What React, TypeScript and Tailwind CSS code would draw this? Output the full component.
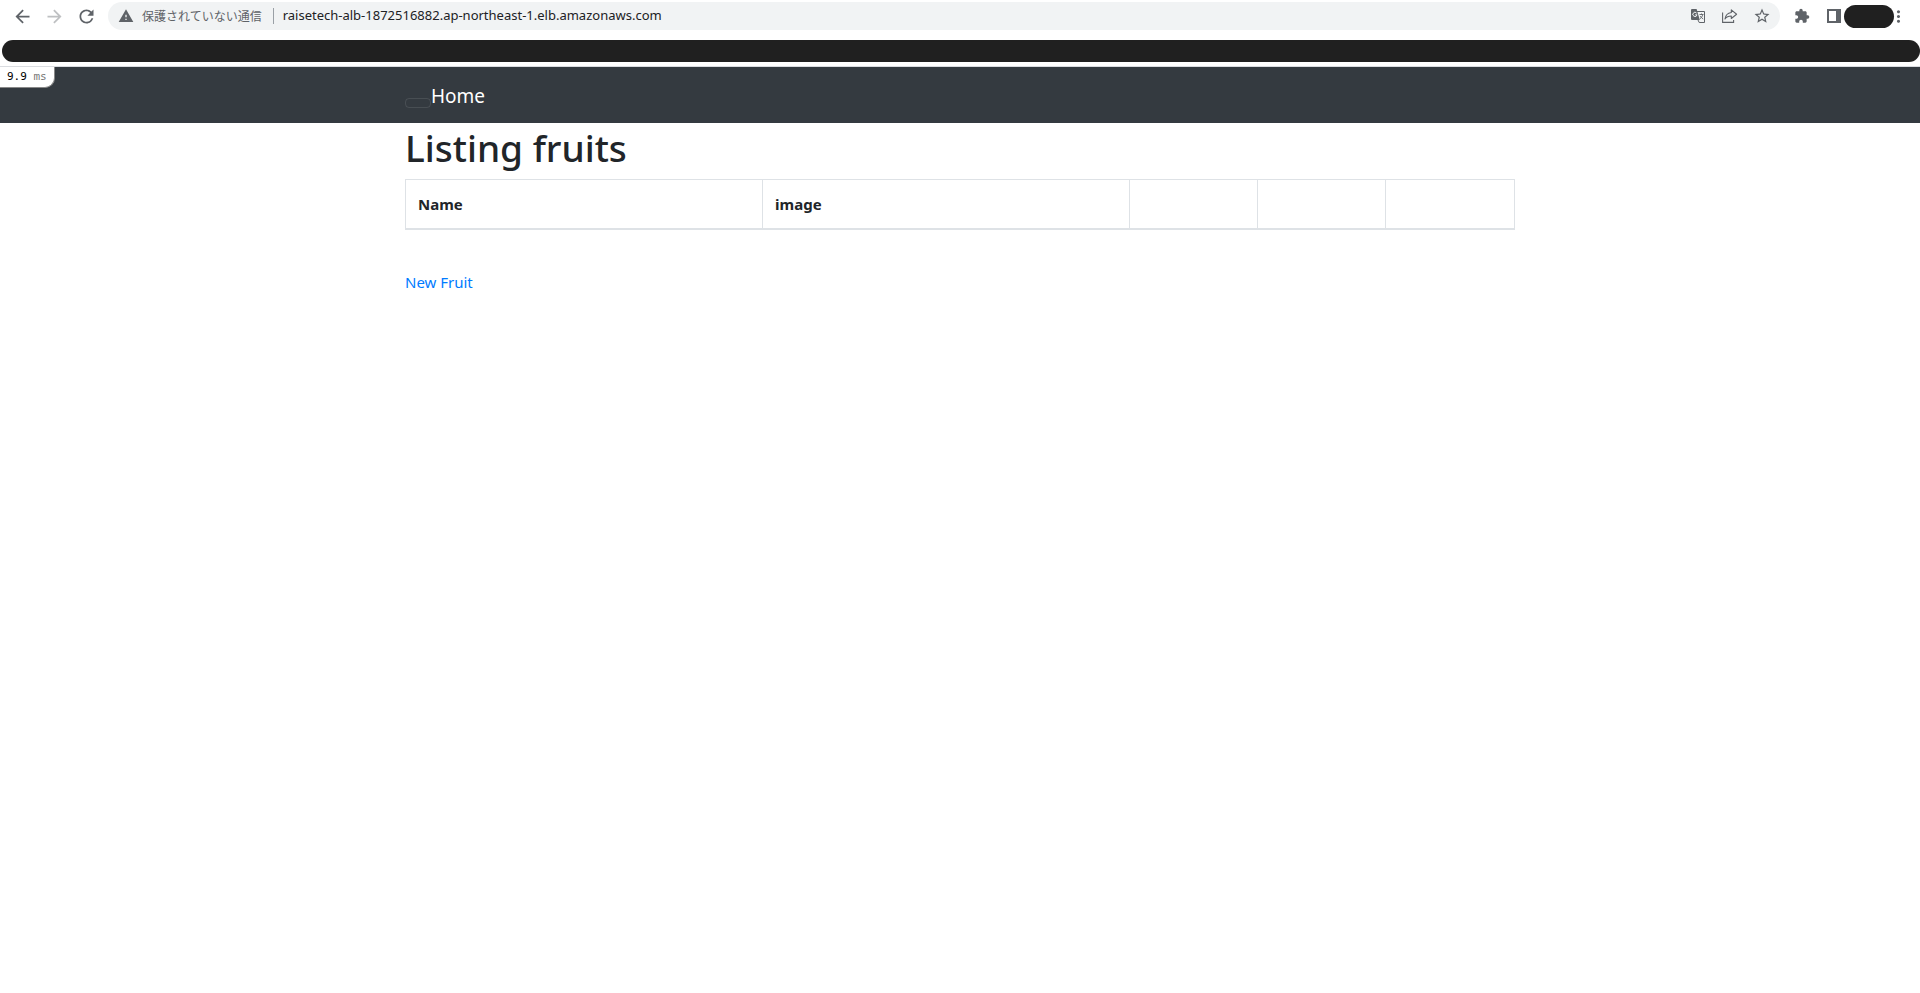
import React from 'react';
import { MdArrowBack, MdArrowForward, MdRefresh, MdWarning, MdStarBorder, MdExtension, MdMoreVert } from 'react-icons/md';

function TranslateIcon() {
  return (
    <svg width="14" height="14" viewBox="0 0 14 14" fill="none" aria-hidden="true">
      <path d="M5.5 2.5h8v11H8.2L7 11" stroke="#5f6368" />
      <path d="M1 0h4.6l3.2 11H1a1 1 0 0 1-1-1V1a1 1 0 0 1 1-1z" fill="#5f6368" />
      <path d="M5.6 4.1A2.1 2.1 0 1 0 6 5.8H4.2" stroke="#f1f3f4" />
      <path d="M8.5 5.5H12.5M10.5 4.5v1M11.7 5.7c-.3 1.700-1.200 2.800-2.600 4M9.300 7c.6 1.100 1.600 2.200 2.900 3" stroke="#5f6368" strokeWidth=".9" />
    </svg>
  );
}

function ShareIcon() {
  return (
    <svg width="16" height="14" viewBox="0 0 16 14" fill="none" stroke="#5f6368" strokeWidth="1.1" aria-hidden="true">
      <path d="M.6 3.500v9.900h11V11" />
      <path d="M9.300.9 14.600 5.200 9.300 9.500V7C6.400 7 4.400 7.900 3 10c.4-3.200 2.500-6 6.300-6.500z" strokeLinejoin="round" />
    </svg>
  );
}

function SidePanelIcon() {
  return (
    <svg width="14" height="14" viewBox="0 0 14 14" aria-hidden="true">
      <path fillRule="evenodd" d="M0 0h14v14H0zM2 2v10h7V2z" fill="#5f6368" />
    </svg>
  );
}

type IconButtonProps = { label: string; className?: string; children: React.ReactNode };

function IconButton({ label, className = 'w-8', children }: IconButtonProps) {
  return (
    <button type="button" aria-label={label} className={`flex h-7 shrink-0 items-center justify-center text-[#5f6368] ${className}`}>
      {children}
    </button>
  );
}

function BrowserBar() {
  return (
    <div className="border-b border-[#dadce0] pb-1 pt-[2px]">
      <div className="flex items-center pl-[6px] pr-[18px]">
        <IconButton label="戻る"><MdArrowBack size={21} /></IconButton>
        <IconButton label="進む" className="w-8 opacity-40"><MdArrowForward size={21} /></IconButton>
        <IconButton label="再読み込み"><MdRefresh size={21} /></IconButton>
        <div className="mx-[6px] flex h-7 min-w-0 flex-1 items-center rounded-full bg-[#f1f3f4] pl-[10px] pr-[2px]">
          <MdWarning size={16} className="shrink-0 text-[#5f6368]" />
          <span className="ml-2 whitespace-nowrap font-['Noto_Sans_CJK_JP',sans-serif] text-xs text-[#5f6368]">保護されていない通信</span>
          <span className="ml-[11px] h-4 w-px bg-[#9aa0a6]" />
          <input
            type="text"
            aria-label="アドレス"
            defaultValue="raisetech-alb-1872516882.ap-northeast-1.elb.amazonaws.com"
            className="ml-[9px] min-w-0 flex-1 bg-transparent text-[13px] text-[#202124] outline-none"
          />
          <IconButton label="翻訳"><TranslateIcon /></IconButton>
          <IconButton label="共有"><ShareIcon /></IconButton>
          <IconButton label="ブックマーク"><MdStarBorder size={18} /></IconButton>
        </div>
        <IconButton label="拡張機能"><MdExtension size={16} /></IconButton>
        <IconButton label="サイドパネル" className="ml-[6px] w-5"><SidePanelIcon /></IconButton>
        <div className="h-[23px] w-[50px] shrink-0 rounded-full bg-[#202020]" />
        <IconButton label="メニュー" className="w-2"><MdMoreVert size={19} className="shrink-0" /></IconButton>
      </div>
      <div className="ml-[2px] mt-[10px] h-[22px] rounded-full bg-[#202020]" />
    </div>
  );
}

function Navbar() {
  return (
    <nav className="relative bg-[#343a40]">
      <div className="absolute left-0 top-0 rounded-br-[10px] border-b border-r border-[#888] bg-white px-[7px] py-[2px] font-['DejaVu_Sans_Mono',monospace] text-[11px] leading-4 text-black">
        9.9 <span className="text-[#777]">ms</span>
      </div>
      <div className="mx-auto flex h-14 max-w-[1140px] items-center px-[15px]">
        <button type="button" aria-label="Toggle navigation" className="mt-4 h-[10px] w-[26px] rounded border border-white/10" />
        <a href="/" className="pt-[2px] text-[19px] leading-[30px] text-white">Home</a>
      </div>
    </nav>
  );
}

const columns = [
  { id: 'name', title: 'Name', width: 'w-[32.2%]' },
  { id: 'image', title: 'image', width: 'w-[33.1%]' },
  { id: 'show', title: '', width: 'w-[11.5%]' },
  { id: 'edit', title: '', width: 'w-[11.6%]' },
  { id: 'destroy', title: '', width: 'w-[11.6%]' },
];

export default function App() {
  return (
    <div className="min-h-screen bg-white font-['Noto_Sans',sans-serif] text-[#212529]">
      <BrowserBar />
      <Navbar />
      <main className="mx-auto max-w-[1140px] px-[15px]">
        <h1 className="mb-2 pt-[2px] text-[37px] font-[550] leading-[46px]">Listing fruits</h1>
        <table className="w-full table-fixed border-collapse border border-[#dee2e6]">
          <thead>
            <tr>
              {columns.map((c) => (
                <th key={c.id} className={`h-[49px] border border-b-2 border-[#dee2e6] px-3 text-left text-[15px] font-bold leading-6 ${c.width}`}>
                  {c.title}
                </th>
              ))}
            </tr>
          </thead>
        </table>
        <div className="mt-10 text-[15px] leading-6">
          <a href="/fruits/new" className="text-[#007bff]">New Fruit</a>
        </div>
      </main>
    </div>
  );
}
